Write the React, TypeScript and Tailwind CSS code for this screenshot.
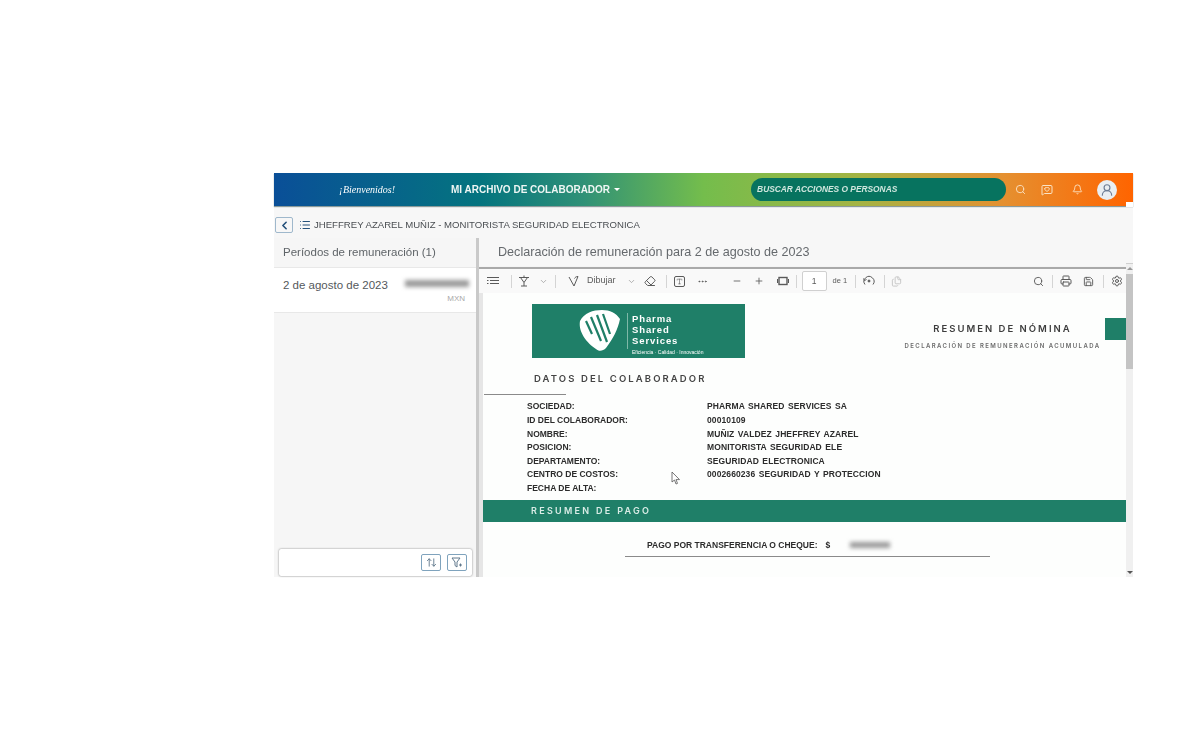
import { Bell, ChevronDown, ChevronLeft, Ellipsis, Eraser, List, Minus, Plus, Printer, Save, Search, Settings, UserRound, MessageSquareHeart, Type, ArrowUpDown, Files } from "lucide-react"

const rows = [
  ["SOCIEDAD:", "PHARMA SHARED SERVICES SA"],
  ["ID DEL COLABORADOR:", "00010109"],
  ["NOMBRE:", "MUÑIZ VALDEZ JHEFFREY AZAREL"],
  ["POSICION:", "MONITORISTA SEGURIDAD ELE"],
  ["DEPARTAMENTO:", "SEGURIDAD ELECTRONICA"],
  ["CENTRO DE COSTOS:", "0002660236 SEGURIDAD Y PROTECCION"],
  ["FECHA DE ALTA:", ""],
]

const Sep = ({ className }: { className: string }) => <span className={`h-[13px] w-px shrink-0 bg-[#d4d4d4] ${className}`} />

const Header = () => (
  <div className="relative flex h-[33px] shrink-0 items-center bg-[linear-gradient(90deg,#0a4f98_0%,#04747f_24%,#2f9177_36%,#74bd4c_50%,#a4b444_68%,#e59030_85%,#ff6400_100%)] shadow-[0_1px_1px_#8a9a9a]">
    <span className="ml-[65px] w-[112px] font-['Liberation_Serif',serif] text-[10px] italic text-white">¡Bienvenidos!</span>
    <span className="flex items-center gap-[3px] text-[10px] font-bold text-[#eef6f4]">
      MI ARCHIVO DE COLABORADOR
      <span className="ml-[1px] h-0 w-0 border-x-[3px] border-t-[3px] border-x-transparent border-t-white" />
    </span>
    <div className="ml-[131px] flex h-[23px] w-[255px] items-center rounded-full bg-[#07735f] pl-[6px] text-[8.4px] font-bold italic text-[#cfe6de]">
      BUSCAR ACCIONES O PERSONAS
    </div>
    <Search className="ml-[9px] text-[#fbe3c4]" size={11} />
    <MessageSquareHeart className="ml-[15px] text-[#fbe3c4]" size={12} />
    <Bell className="ml-[19px] text-[#fbe3c4]" size={11} />
    <div className="ml-[14px] flex h-[20px] w-[20px] items-center justify-center rounded-full bg-[#e9eef2]">
      <UserRound className="text-[#6d7d95]" size={14} />
    </div>
    <span className="absolute right-0 top-[29px] h-[5px] w-[7px] bg-white" />
  </div>
)

const Sidebar = () => (
  <div className="flex w-[205px] shrink-0 flex-col border-r-[3px] border-[#c9c9c9] bg-[#f6f6f6]">
    <div className="flex h-[29px] shrink-0 items-center pl-[9px] text-[11.5px] text-[#5f6468]">Períodos de remuneración (1)</div>
    <div className="relative flex h-[46px] shrink-0 items-start border-y border-[#e8e8e8] bg-white pl-[9px] pt-[9px] text-[11.5px] text-[#54585c]">
      2 de agosto de 2023
      <span className="ml-[17px] mt-[3px] h-[7px] w-[64px] bg-[#9a9a9a] blur-[2px]" />
      <span className="absolute right-[11px] top-[25px] text-[8px] text-[#a9a9a9]">MXN</span>
    </div>
    <div className="flex flex-1 items-end pb-[1px] pl-[5px] pr-[4px]">
      <div className="flex h-[27px] w-full items-center justify-end gap-[6px] rounded-[2px] bg-white pr-[5px] shadow-[0_0_2px_#777]">
        <span className="flex h-[17px] w-[20px] items-center justify-center rounded-[2px] border border-[#7fa3bd] text-[#60788c]">
          <ArrowUpDown size={11} />
        </span>
        <span className="flex h-[17px] w-[20px] items-center justify-center rounded-[2px] border border-[#7fa3bd] text-[#60788c]">
          <svg width="12" height="11" viewBox="0 0 12 11" fill="none" stroke="currentColor" strokeWidth="1">
            <path d="M1 1h8L6 5v5L4 8.5V5z" />
            <path d="M8 8h3M9.5 6.5v3" />
          </svg>
        </span>
      </div>
    </div>
  </div>
)

const Toolbar = () => (
  <div className="flex h-[26px] shrink-0 items-center border-t-2 border-[#a9a9a9] bg-[#f9f9f9] pl-[8px] pr-[3px] text-[#5a5a5a] shadow-[0_1px_2px_#ccc]">
    <svg className="shrink-0" width="12" height="10" viewBox="0 0 12 10" stroke="currentColor" strokeWidth="1">
      <path d="M0 1.5h12M3 4.5h9M0 4.5h1.5M3 7.5h9M0 7.5h1.5" />
    </svg>
    <Sep className="ml-[12px]" />
    <svg className="ml-[6px] shrink-0" width="12" height="12" viewBox="0 0 12 12" fill="none" stroke="currentColor" strokeWidth="1">
      <path d="M1 2.5h10M2.5 2.5l3.5 5 3.5-5M6 7.5V11M3 11h6M6 0.5v2" />
    </svg>
    <ChevronDown className="ml-[9px] shrink-0 text-[#999]" size={9} />
    <Sep className="ml-[7px]" />
    <svg className="ml-[12px] shrink-0" width="12" height="12" viewBox="0 0 12 12" fill="none" stroke="currentColor" strokeWidth="1">
      <path d="M1 2l5 9 4-9.5M10 1.5c-2 0-3 1-3.5 2" />
    </svg>
    <span className="ml-[7px] shrink-0 text-[9px]">Dibujar</span>
    <ChevronDown className="ml-[11px] shrink-0 text-[#999]" size={9} />
    <Eraser className="ml-[8px] shrink-0" size={12} />
    <Sep className="ml-[10px]" />
    <Type className="ml-[7px] shrink-0 rounded-[2px] border border-[#5a5a5a] p-[1px]" size={11} />
    <Ellipsis className="ml-[12px] shrink-0" size={11} />
    <Minus className="ml-[24px] shrink-0" size={10} />
    <Plus className="ml-[12px] shrink-0" size={10} />
    <svg className="ml-[13px] shrink-0" width="12" height="10" viewBox="0 0 12 10" fill="none" stroke="currentColor">
      <rect x="2" y="1.5" width="8" height="7" strokeWidth="1.4" />
      <path d="M0.5 3v4M11.5 3v4" strokeWidth="1" />
    </svg>
    <Sep className="ml-[7px]" />
    <span className="ml-[5px] flex h-[20px] w-[25px] shrink-0 items-center justify-center rounded-[2px] border border-[#d0d0d0] bg-white text-[8.5px]">1</span>
    <span className="ml-[6px] shrink-0 text-[7.5px]">de 1</span>
    <Sep className="ml-[8px]" />
    <svg className="ml-[7px] shrink-0" width="12" height="12" viewBox="0 0 12 12" fill="none" stroke="currentColor" strokeWidth="1">
      <path d="M2 9.5A5 5 0 1 1 10 9.5M0.5 3.5L1.5 5.5 3.5 4.5" />
      <circle cx="6" cy="6" r="1" fill="currentColor" />
    </svg>
    <Sep className="ml-[9px]" />
    <Files className="ml-[6px] shrink-0 text-[#c4c4c4]" size={11} />
    <Search className="ml-auto shrink-0" size={11} />
    <Sep className="ml-[8px]" />
    <Printer className="ml-[7px] shrink-0" size={12} />
    <Save className="ml-[11px] shrink-0" size={11} />
    <Sep className="ml-[9px]" />
    <Settings className="ml-[7px] shrink-0" size={12} />
  </div>
)

const Logo = () => (
  <div className="ml-[49px] flex h-[54px] w-[213px] shrink-0 items-center bg-[#1f7f68] pl-[46px] text-white">
    <svg className="shrink-0" width="43" height="42" viewBox="0 0 43 42">
      <path d="M2 11C6 3 15 0 24 0c8 0 14 3 18 9-2 10-7 20-14 29-3 3-7 4-10 1C9 33 0 22 2 11z" fill="#fff" />
      <path d="M8 11l6 13M13 7l10 24M19 5l10 27M25 4l7 20" stroke="#1f7f68" strokeWidth="2.2" />
    </svg>
    <span className="ml-[6px] h-[36px] w-px bg-[#7fb8a8]" />
    <div className="ml-[4px] flex flex-col self-start pt-[9px]">
      <span className="text-[9.5px] font-bold leading-[11px] tracking-[0.9px]">Pharma</span>
      <span className="text-[9.5px] font-bold leading-[11px] tracking-[0.9px]">Shared</span>
      <span className="text-[9.5px] font-bold leading-[11px] tracking-[0.9px]">Services</span>
      <span className="mt-[3px] whitespace-nowrap text-[5px]">Eficiencia · Calidad · Innovación</span>
    </div>
  </div>
)

const Document = () => (
  <div className="relative flex-1 overflow-hidden bg-[#fdfefd] font-['Liberation_Sans',sans-serif]">
    <div className="flex pt-[11px]">
      <Logo />
      <div className="ml-[160px] mt-[18px] flex w-[195px] flex-col items-center">
        <span className="font-['Inter',sans-serif] text-[9.5px] font-semibold tracking-[2px] text-[#3d3d3d]">RESUMEN DE NÓMINA</span>
        <span className="mt-[5px] whitespace-nowrap font-['Inter',sans-serif] text-[6px] font-semibold tracking-[1.4px] text-[#6a6a6a]">DECLARACIÓN DE REMUNERACIÓN ACUMULADA</span>
      </div>
      <div className="ml-auto mt-[14px] h-[22px] w-[21px] shrink-0 bg-[#1f7f68]" />
    </div>
    <div className="ml-[51px] mt-[14px] font-['Inter',sans-serif] text-[9.5px] font-semibold leading-[14px] tracking-[2.1px] text-[#444]">DATOS DEL COLABORADOR</div>
    <div className="ml-px mt-[8px] h-px w-[82px] bg-[#8a8a8a]" />
    <div className="ml-[44px] mt-[5px] flex flex-col">
      {rows.map(([label, value]) => (
        <div className="flex h-[13.6px] items-center text-[8.5px] font-bold text-[#2c2c2c]" key={label}>
          <span className="w-[180px] whitespace-nowrap">{label}</span>
          <span className="whitespace-nowrap tracking-[0.1px] [word-spacing:1px]">{value}</span>
        </div>
      ))}
    </div>
    <div className="mt-[5px] flex h-[22px] items-center bg-[#1f7f68] pl-[48px] font-['Inter',sans-serif] text-[9px] font-semibold tracking-[2.3px] text-[#d9ece6]">RESUMEN DE PAGO</div>
    <div className="ml-[142px] mt-[14px] flex h-[21px] w-[365px] items-start justify-start border-b border-[#8a8a8a] pl-[22px] pt-[3px] text-[8.5px] font-bold text-[#2c2c2c]">
      PAGO POR TRANSFERENCIA O CHEQUE:
      <span className="ml-[8px]">$</span>
      <span className="ml-[20px] mt-[3px] h-[6px] w-[40px] bg-[#9a9a9a] blur-[2px]" />
    </div>
    <svg className="absolute left-[188px] top-[178px]" width="10" height="14" viewBox="0 0 10 14" fill="#fff" stroke="#555" strokeWidth="0.8">
      <path d="M1 1v10l2.5-2 1.5 4 1.5-.6L5 8.6h3.5z" />
    </svg>
  </div>
)

export default function App() {
  return (
    <div className="h-[750px] w-[1200px] bg-white pl-[274px] pt-[173px] font-['Liberation_Sans',sans-serif]">
      <div className="flex h-[404px] w-[859px] flex-col bg-[#f7f7f7] blur-[0.4px]">
        <Header />
        <div className="flex h-[32px] shrink-0 items-center pl-[1px] pt-[6px] text-[9.6px] text-[#4a4e52]">
          <span className="flex h-[16px] w-[18px] items-center justify-center rounded-[2px] border border-[#9fb8cc] text-[#24507a]">
            <ChevronLeft size={13} strokeWidth={3} />
          </span>
          <List className="ml-[6px] text-[#24507a]" size={12} />
          <span className="ml-[3px]">JHEFFREY AZAREL MUÑIZ - MONITORISTA SEGURIDAD ELECTRONICA</span>
        </div>
        <div className="flex min-h-0 flex-1">
          <Sidebar />
          <div className="flex min-w-0 flex-1 flex-col">
            <div className="flex h-[29px] shrink-0 items-center pl-[19px] text-[12.6px] text-[#65696d]">Declaración de remuneración para 2 de agosto de 2023</div>
            <div className="flex min-h-0 flex-1">
              <div className="flex min-w-0 flex-1 flex-col">
                <Toolbar />
                <div className="flex min-h-0 flex-1 bg-[#e6e6e6] pl-[4px]">
                  <Document />
                </div>
              </div>
              <div className="-mt-[4px] flex w-[7px] shrink-0 flex-col border-t border-[#cfcfcf] bg-[#f0f0f0]">
                <span className="ml-[1px] mt-[3px] h-0 w-0 border-x-[3px] border-b-[3px] border-x-transparent border-b-[#999]" />
                <div className="mt-[4px] h-[95px] bg-[#c4c4c4]" />
                <span className="mb-[3px] ml-[1px] mt-auto h-0 w-0 border-x-[3px] border-t-[3px] border-x-transparent border-t-[#555]" />
              </div>
            </div>
          </div>
        </div>
      </div>
    </div>
  )
}
